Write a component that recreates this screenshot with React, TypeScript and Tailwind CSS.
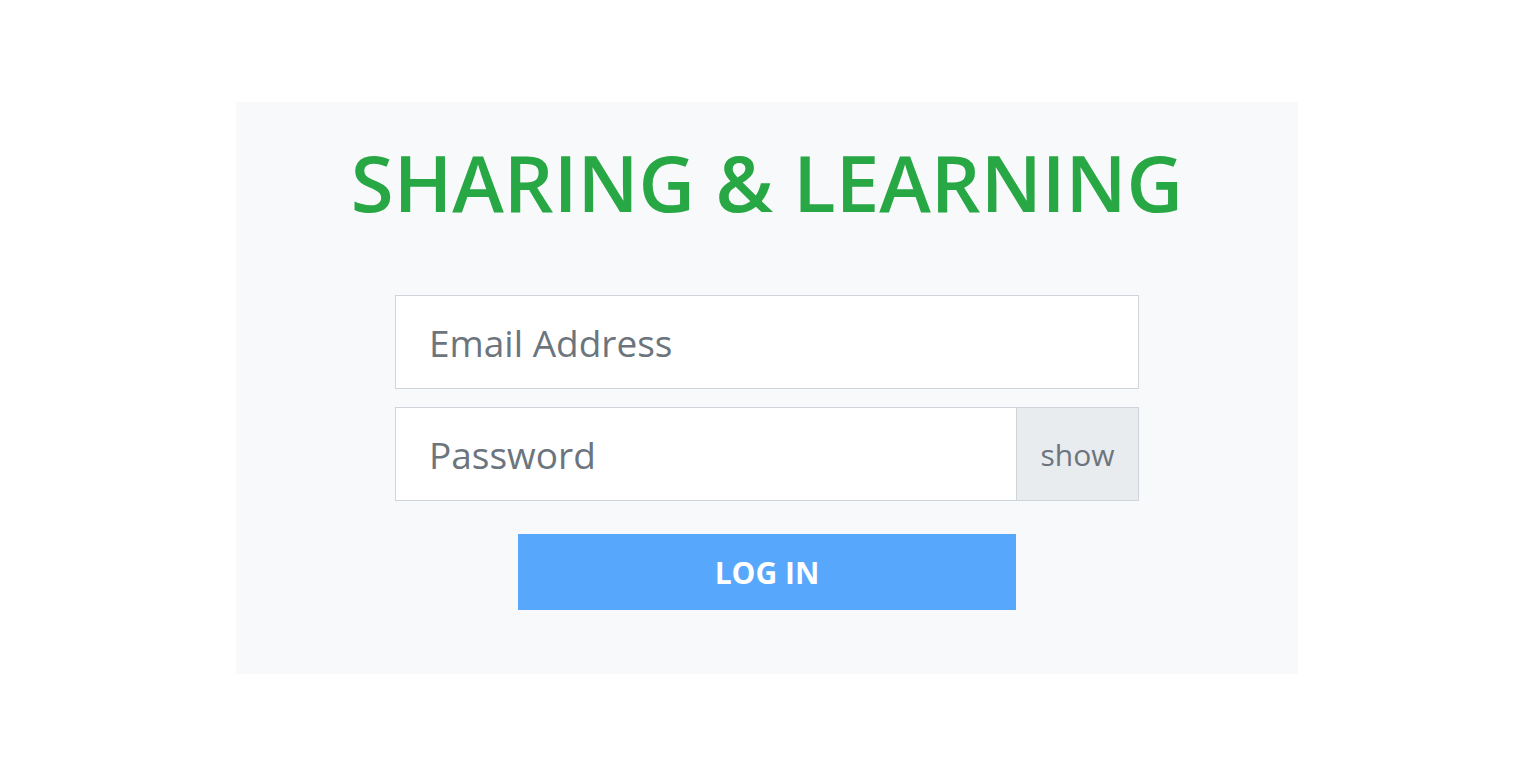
export default function App() {
  return (
    <div className="min-h-screen bg-white pt-[102px]" style={{ fontFamily: '"Open Sans", "Noto Sans", sans-serif' }}>
      <div className="mx-auto flex w-[1062px] flex-col items-center bg-[#f8f9fa] pt-[32px] pb-[64px]">
        <h1 className="text-[78px] leading-[96px] font-semibold text-[#28a745]">SHARING &amp; LEARNING</h1>

        <form className="mt-[65px] flex w-[744px] flex-col gap-[18px]" onSubmit={(e) => e.preventDefault()}>
          <input
            type="email"
            placeholder="Email Address"
            className="h-[94px] w-full border border-[#ced4da] bg-white px-[33px] text-[37px] text-[#495057] outline-none placeholder:text-[#6c757d]"
          />
          <div className="flex h-[94px] w-full">
            <input
              type="password"
              placeholder="Password"
              className="h-full min-w-0 flex-1 border border-[#ced4da] bg-white px-[33px] text-[37px] text-[#495057] outline-none placeholder:text-[#6c757d]"
            />
            <span className="-ml-px flex h-full w-[123px] items-center justify-center border border-[#ced4da] bg-[#e9ecef] text-[30px] text-[#6c757d]">
              show
            </span>
          </div>
          <button
            type="submit"
            className="mx-auto mt-[15px] h-[76px] w-[498px] bg-[#57a8fc] text-[30px] font-bold text-white"
          >
            LOG IN
          </button>
        </form>
      </div>
    </div>
  );
}
